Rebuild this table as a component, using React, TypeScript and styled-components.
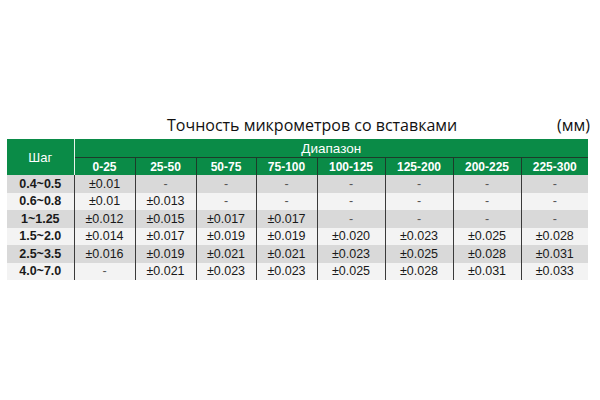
import React from "react";
import styled, { createGlobalStyle } from "styled-components";

const GlobalStyle = createGlobalStyle`
  html, body {
    margin: 0;
    padding: 0;
    background: #ffffff;
  }
`;

const ranges = ["0-25", "25-50", "50-75", "75-100", "100-125", "125-200", "200-225", "225-300"];
const widths = [67, 61, 61, 60, 61, 68, 68, 68, 67];

const rows: { step: string; values: string[] }[] = [
  { step: "0.4~0.5", values: ["±0.01", "-", "-", "-", "-", "-", "-", "-"] },
  { step: "0.6~0.8", values: ["±0.01", "±0.013", "-", "-", "-", "-", "-", "-"] },
  { step: "1~1.25", values: ["±0.012", "±0.015", "±0.017", "±0.017", "-", "-", "-", "-"] },
  { step: "1.5~2.0", values: ["±0.014", "±0.017", "±0.019", "±0.019", "±0.020", "±0.023", "±0.025", "±0.028"] },
  { step: "2.5~3.5", values: ["±0.016", "±0.019", "±0.021", "±0.021", "±0.023", "±0.025", "±0.028", "±0.031"] },
  { step: "4.0~7.0", values: ["-", "±0.021", "±0.023", "±0.023", "±0.025", "±0.028", "±0.031", "±0.033"] },
];

const App: React.FC = () => {
  return (
    <>
      <GlobalStyle />
      <Page>
        <TitleRow>
          <Title>Точность микрометров со вставками</Title>
          <Unit>(мм)</Unit>
        </TitleRow>
        <Table>
          <colgroup>
            {widths.map((w, i) => (
              <col key={i} style={{ width: w }} />
            ))}
          </colgroup>
          <thead>
            <tr>
              <StepHead rowSpan={2}>Шаг</StepHead>
              <GroupHead colSpan={8}>Диапазон</GroupHead>
            </tr>
            <tr>
              {ranges.map((r) => (
                <RangeHead key={r}>{r}</RangeHead>
              ))}
            </tr>
          </thead>
          <tbody>
            {rows.map((row, i) => (
              <Row key={row.step} $shaded={i % 2 === 0}>
                <StepCell>{row.step}</StepCell>
                {row.values.map((v, j) => (
                  <ValueCell key={j} $dash={v === "-"}>
                    {v}
                  </ValueCell>
                ))}
              </Row>
            ))}
          </tbody>
        </Table>
      </Page>
    </>
  );
};

export default App;

const Page = styled.div`
  width: 600px;
  height: 400px;
  padding: 115px 0 0 7px;
  box-sizing: border-box;
  font-family: "Liberation Sans", Arial, sans-serif;
`;

const TitleRow = styled.div`
  width: 583px;
  height: 24px;
  display: flex;
  align-items: flex-start;
  justify-content: space-between;
  padding-left: 160px;
  box-sizing: border-box;
  font-family: "Open Sans", "Liberation Sans", sans-serif;
  font-size: 16px;
  color: #111;
  line-height: 21px;
`;

const Title = styled.span``;

const Unit = styled.span``;

const Table = styled.table`
  border-collapse: collapse;
  table-layout: fixed;
  width: 581px;
  font-family: "Liberation Sans", Arial, sans-serif;
`;

const GreenCell = styled.th`
  background: #0a8b47;
  color: #ffffff;
  padding: 0;
  text-align: center;
  white-space: nowrap;
`;

const StepHead = styled(GreenCell)`
  font-size: 13px;
  font-weight: normal;
  border-right: 1px solid #e8f3ec;
  height: 36px;
`;

const GroupHead = styled(GreenCell)`
  font-size: 13.5px;
  font-weight: normal;
  height: 18px;
  border-bottom: 1px solid #1d3b2a;
`;

const RangeHead = styled(GreenCell)`
  font-size: 12px;
  font-weight: bold;
  height: 17px;
  border-left: 1px solid #1d3b2a;
  &:first-child {
    border-left: none;
  }
`;

const Row = styled.tr<{ $shaded: boolean }>`
  background: ${(p) => (p.$shaded ? "#d9d9d9" : "#f3f3f3")};
  height: 17.5px;
`;

const StepCell = styled.td`
  && {
    font-size: 12.5px;
  }
  font-weight: bold;
  color: #1a1a1a;
  text-align: center;
  padding: 0;
  border-right: 1px solid #3a3a3a;
  white-space: nowrap;
`;

const ValueCell = styled.td<{ $dash: boolean }>`
  && {
    font-size: 12.5px;
  }
  color: ${(p) => (p.$dash ? "#555" : "#1a1a1a")};
  text-align: center;
  padding: 0;
  border-left: 1px solid #3a3a3a;
  white-space: nowrap;
`;
